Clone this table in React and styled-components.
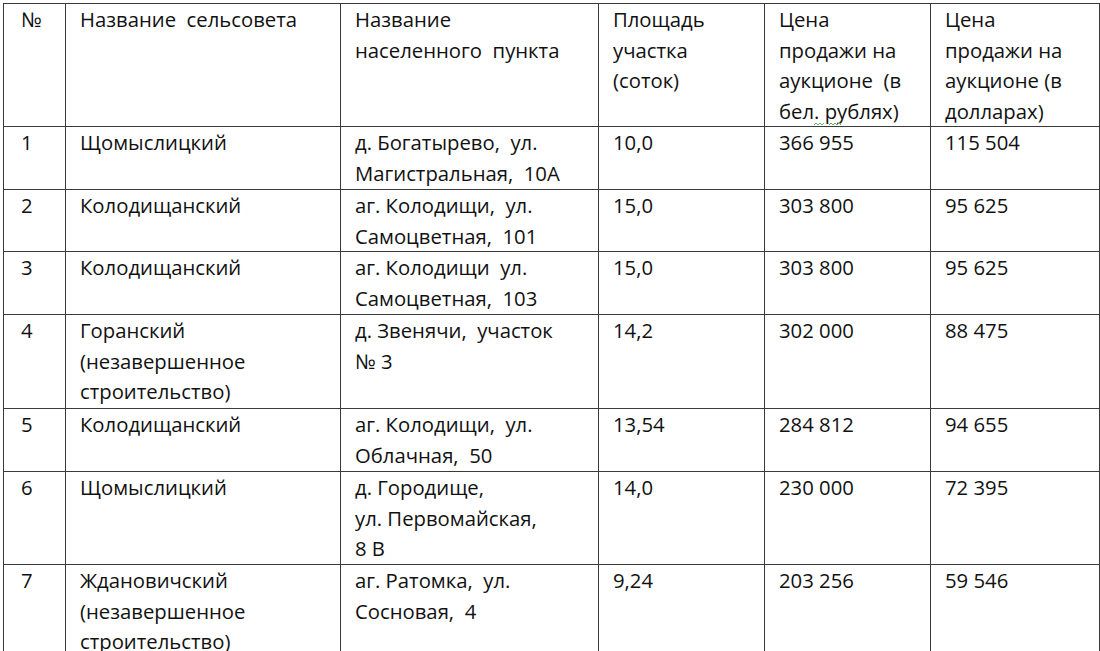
import React from 'react';
import styled, { createGlobalStyle } from 'styled-components';

const Global = createGlobalStyle`
  html, body { margin: 0; padding: 0; background: #fff; }
  body { font-family: "Open Sans", "Noto Sans", sans-serif; color: #111; }
`;

const Page = styled.div`
  padding: 3px 0 0 3px;
  width: 1100px;
  height: 651px;
  overflow: hidden;
  box-sizing: border-box;
`;

const Table = styled.table`
  border-collapse: collapse;
  table-layout: fixed;
  width: 1096px;
`;

const Row = styled.tr`
  height: ${p => p.$h}px;
`;

const Cell = styled.td`
  border: 1.5px solid #3a3a3a;
  vertical-align: top;
  padding: 0 0 0 ${p => p.$indent || 14}px;
  font-size: 20.3px;
  white-space: pre;
  overflow: hidden;
`;

const Line = styled.div`
  position: relative;
  height: 30.5px;
  line-height: 31px;
`;

const Wave = styled.svg`
  position: absolute;
  top: 26px;
  left: ${p => p.$x}px;
  width: ${p => p.$w}px;
  height: 4px;
`;

const widths = [62, 275, 258, 166, 166, 169];

const head = [
  ['№'],
  ['Название  сельсовета'],
  ['Название', 'населенного  пункта'],
  ['Площадь', 'участка', '(соток)'],
  ['Цена', 'продажи на', 'аукционе  (в', 'бел. рублях)'],
  ['Цена', 'продажи на', 'аукционе (в', 'долларах)'],
];

const rows = [
  { h: 63, c: [['1'], ['Щомыслицкий'], ['д. Богатырево,  ул.', 'Магистральная,  10А'], ['10,0'], ['366 955'], ['115 504']] },
  { h: 61, c: [['2'], ['Колодищанский'], ['аг. Колодищи,  ул.', 'Самоцветная,  101'], ['15,0'], ['303 800'], ['95 625']] },
  { h: 63, c: [['3'], ['Колодищанский'], ['аг. Колодищи  ул.', 'Самоцветная,  103'], ['15,0'], ['303 800'], ['95 625']] },
  { h: 94, c: [['4'], ['Горанский', '(незавершенное', 'строительство)'], ['д. Звенячи,  участок', '№ 3'], ['14,2'], ['302 000'], ['88 475']] },
  { h: 63, c: [['5'], ['Колодищанский'], ['аг. Колодищи,  ул.', 'Облачная,  50'], ['13,54'], ['284 812'], ['94 655']] },
  { h: 93, c: [['6'], ['Щомыслицкий'], ['д. Городище,', 'ул. Первомайская,', '8 В'], ['14,0'], ['230 000'], ['72 395']] },
  { h: 94, c: [['7'], ['Ждановичский', '(незавершенное', 'строительство)'], ['аг. Ратомка,  ул.', 'Сосновая,  4'], ['9,24'], ['203 256'], ['59 546']] },
];

function WavyMark({ x, w }) {
  const d = [];
  for (let i = 0; i <= w; i += 2) d.push(`${i},${i % 4 === 0 ? 3 : 1}`);
  return (
    <Wave $x={x} $w={w} viewBox={`0 0 ${w} 4`}>
      <polyline points={d.join(' ')} fill="none" stroke="#5cb85c" strokeWidth="1" />
    </Wave>
  );
}

export default function App() {
  return (
    <Page>
      <Global />
      <Table>
        <colgroup>
          {widths.map((w, i) => <col key={i} style={{ width: w }} />)}
        </colgroup>
        <tbody>
          <Row $h={123}>
            {head.map((lines, j) => (
              <Cell key={j} $indent={j === 0 ? 17 : 14}>
                {lines.map((l, k) => (
                  <Line key={k}>
                    {l}
                    {j === 4 && k === 3 && <><WavyMark x={35} w={10} /><WavyMark x={50} w={12} /></>}
                  </Line>
                ))}
              </Cell>
            ))}
          </Row>
          {rows.map((r, i) => (
            <Row key={i} $h={r.h}>
              {r.c.map((lines, j) => (
                <Cell key={j} $indent={j === 0 ? 17 : 14}>
                  {lines.map((l, k) => <Line key={k}>{l}</Line>)}
                </Cell>
              ))}
            </Row>
          ))}
        </tbody>
      </Table>
    </Page>
  );
}
